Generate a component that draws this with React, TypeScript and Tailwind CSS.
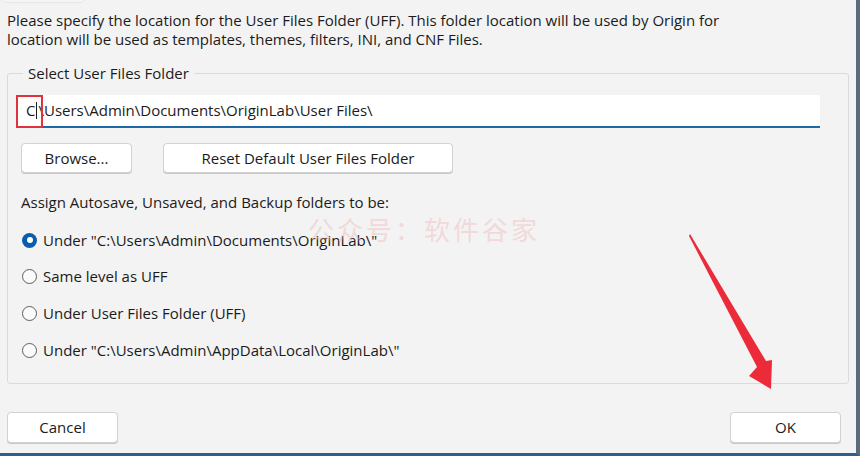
import { useState } from "react";

const font = { fontFamily: '"Open Sans", "Noto Sans", Arial, sans-serif' };

const options = [
  'Under "C:\\Users\\Admin\\Documents\\OriginLab\\"',
  "Same level as UFF",
  "Under User Files Folder (UFF)",
  'Under "C:\\Users\\Admin\\AppData\\Local\\OriginLab\\"',
];

function Radio({ checked, label, onClick }: { checked: boolean; label: string; onClick: () => void }) {
  return (
    <button type="button" onClick={onClick} className="flex h-[20px] items-center gap-[6px] text-left">
      {checked ? (
        <span className="flex h-[15px] w-[15px] items-center justify-center rounded-full bg-[#0b5cad]">
          <span className="h-[6px] w-[6px] rounded-full bg-white" />
        </span>
      ) : (
        <span className="h-[15px] w-[15px] rounded-full border border-[#5d5d5d] bg-[#fbfbfb]" />
      )}
      <span>{label}</span>
    </button>
  );
}

function WinButton({ children, className }: { children: React.ReactNode; className?: string }) {
  return (
    <button
      type="button"
      className={`flex h-[30px] items-center justify-center rounded-[4px] border border-[#d2d2d2] bg-white text-[#1b1b1b] shadow-[0_1px_0_#c8c8c8] ${className ?? ""}`}
    >
      {children}
    </button>
  );
}

export default function App() {
  const [choice, setChoice] = useState(0);

  return (
    <div
      style={font}
      className="relative flex h-[456px] w-[860px] flex-col overflow-hidden border-r-[4px] border-b-[3px] border-r-[#5b6b7c] border-b-[#2d5f8c] bg-[#f3f3f3] text-[15px] leading-[19px] text-[#1b1b1b]"
    >
      <div className="absolute left-0 top-[-6px] h-[9px] w-[86px] rounded-b-[6px] border border-[#e8e8e8] bg-[#f5f5f5]" />

      <p className="mt-[11px] pl-[7px]">
        Please specify the location for the User Files Folder (UFF). This folder location will be used by Origin for
        <br />
        location will be used as templates, themes, filters, INI, and CNF Files.
      </p>

      <fieldset className="mx-[7px] mt-[15px] h-[320px] rounded-[3px] border border-[#dadada] pl-[9px]">
        <legend className="ml-[6px] px-[5px]">Select User Files Folder</legend>

        <div className="relative mt-[12px] flex h-[33px] w-[803px] items-center border-b-[2px] border-b-[#1b6aa5] bg-white pl-[9px]">
          <span>C</span>
          <span className="mx-[1px] h-[17px] w-px bg-[#1b1b1b]" />
          <span>{"\\Users\\Admin\\Documents\\OriginLab\\User Files\\"}</span>
          <div className="absolute left-[-1px] top-0 h-[33px] w-[27px] border-2 border-[#e0323c]" />
        </div>

        <div className="mt-[15px] flex gap-[31px] pl-[4px]">
          <WinButton className="w-[111px]">Browse...</WinButton>
          <WinButton className="w-[290px]">Reset Default User Files Folder</WinButton>
        </div>

        <p className="mt-[20px] pl-[4px]">Assign Autosave, Unsaved, and Backup folders to be:</p>

        <div className="mt-[18px] flex flex-col gap-[16.7px] pl-[5px]">
          {options.map((label, i) => (
            <Radio key={label} checked={choice === i} label={label} onClick={() => setChoice(i)} />
          ))}
        </div>
      </fieldset>

      <div className="mt-[28px] flex justify-between pl-[7px] pr-[15px]">
        <WinButton className="h-[31px] w-[111px]">Cancel</WinButton>
        <WinButton className="h-[31px] w-[111px]">OK</WinButton>
      </div>

      <div
        className="pointer-events-none absolute left-[308px] top-[215px] tracking-[3px] text-[26px] leading-[28px] text-[#f0b4b4] opacity-40"
        style={{ fontFamily: '"Noto Sans CJK SC", sans-serif' }}
      >
        公众号：软件谷家
      </div>

      <svg className="pointer-events-none absolute left-0 top-0" width="860" height="456" viewBox="0 0 860 456">
        <polygon points="690,234 766,361 772,360 771,389 749,376 757,367 689,236" fill="#ec2b3a" />
      </svg>
    </div>
  );
}
